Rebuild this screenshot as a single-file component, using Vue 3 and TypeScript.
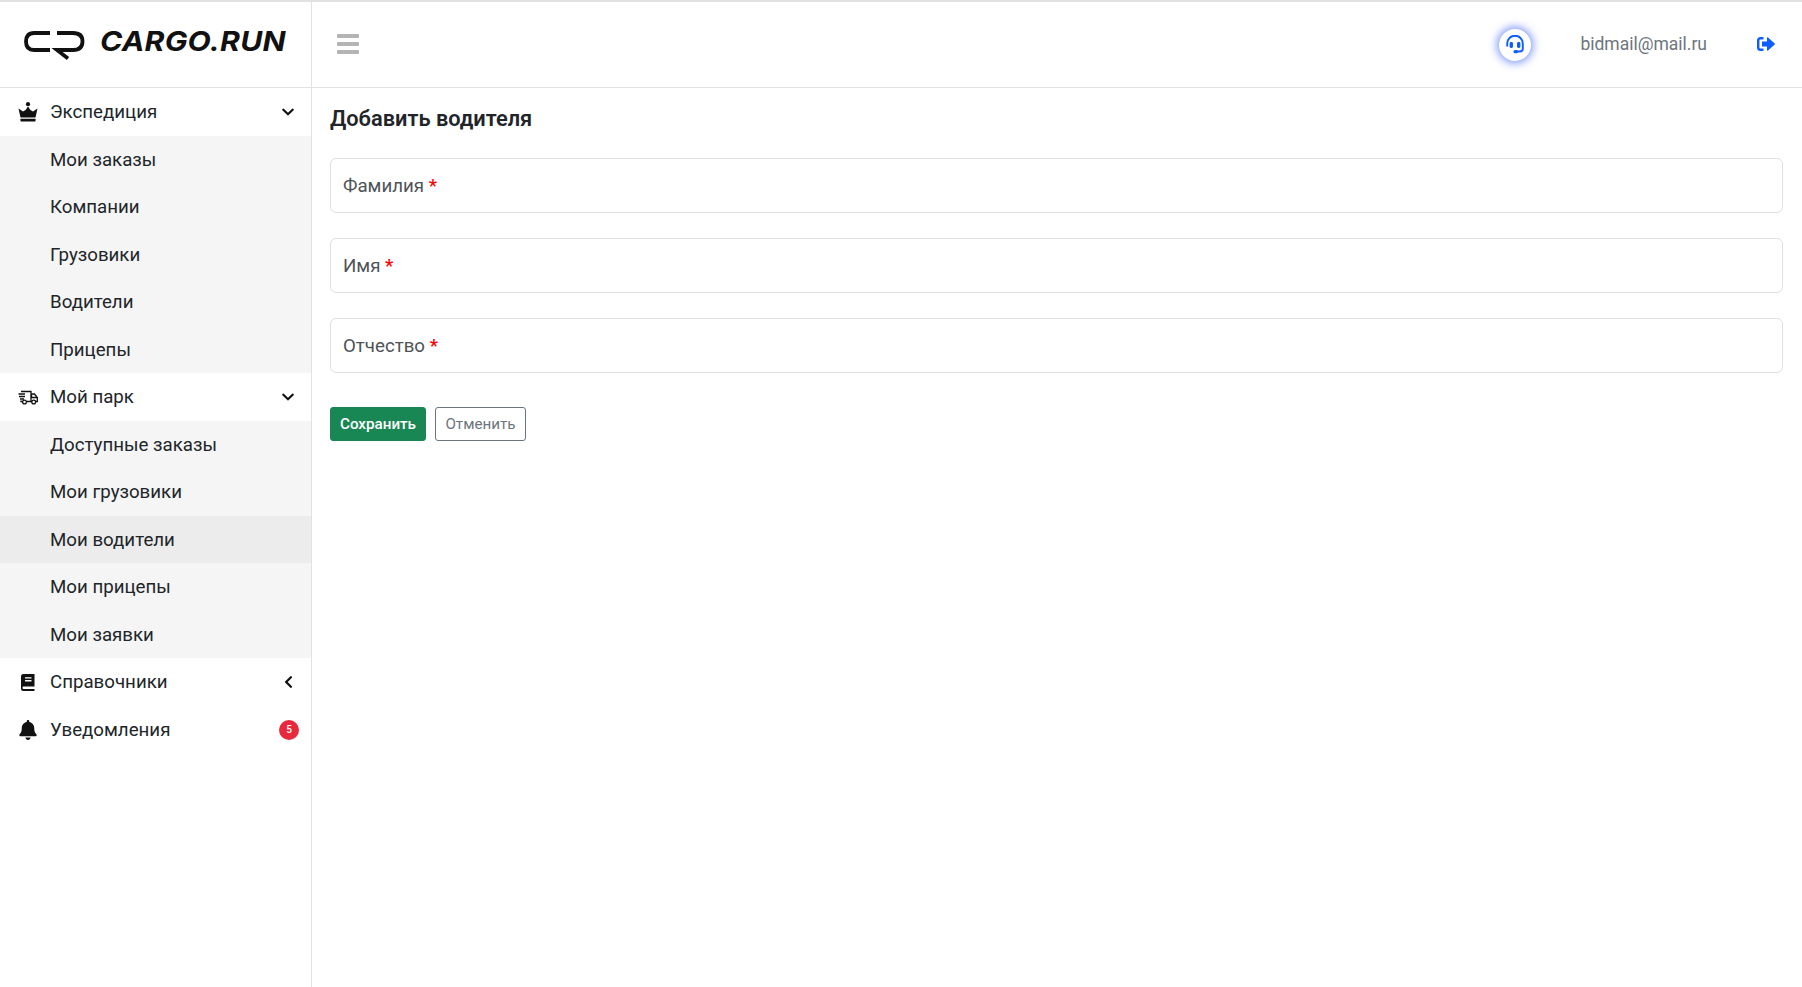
<script setup lang="ts">
interface Group {
  name: string
  icon: 'crown' | 'truck' | 'book' | 'bell'
  chevron?: 'down' | 'left'
  badge?: number
  items: { label: string; active?: boolean }[]
}

const groups: Group[] = [
  {
    name: 'Экспедиция',
    icon: 'crown',
    chevron: 'down',
    items: [
      { label: 'Мои заказы' },
      { label: 'Компании' },
      { label: 'Грузовики' },
      { label: 'Водители' },
      { label: 'Прицепы' },
    ],
  },
  {
    name: 'Мой парк',
    icon: 'truck',
    chevron: 'down',
    items: [
      { label: 'Доступные заказы' },
      { label: 'Мои грузовики' },
      { label: 'Мои водители', active: true },
      { label: 'Мои прицепы' },
      { label: 'Мои заявки' },
    ],
  },
  { name: 'Справочники', icon: 'book', chevron: 'left', items: [] },
  { name: 'Уведомления', icon: 'bell', badge: 5, items: [] },
]

const fields = ['Фамилия', 'Имя', 'Отчество']
</script>

<template>
  <div class="shell">
    <header class="brand">
      <svg class="logo-mark" viewBox="0 0 62 30" width="62" height="30" aria-hidden="true">
        <path d="M26 2H10Q2 2 2 10.500Q2 19 10 19H26" fill="none" stroke="#111" stroke-width="3.800" />
        <path d="M33 2H49Q58.500 2 58.500 10.500Q58.500 19 49 19H33L44 27.500" fill="none" stroke="#111" stroke-width="3.800" />
      </svg>
      <span class="logo-text">CARGO.RUN</span>
    </header>

    <div class="topbar">
      <svg class="burger" viewBox="0 0 22 20" width="22" height="20" aria-hidden="true">
        <rect x="0" y="0" width="22" height="4" rx="1" />
        <rect x="0" y="8" width="22" height="4" rx="1" />
        <rect x="0" y="16" width="22" height="4" rx="1" />
      </svg>
      <div class="top-right">
        <span class="support">
          <svg viewBox="0 0 18 19" width="18" height="19" aria-hidden="true">
            <path d="M1.200 11.500V8.500a7.800 7.800 0 0 1 15.600 0v5q0 3-3 3h-3" fill="none" stroke="#0d5efd" stroke-width="1.900" />
            <rect x="3.600" y="7" width="3.400" height="6" rx="1.400" fill="#0d5efd" />
            <rect x="11" y="7" width="3.400" height="6" rx="1.400" fill="#0d5efd" />
            <rect x="7.500" y="15" width="4.500" height="3.200" rx="1.500" fill="#0d5efd" />
          </svg>
        </span>
        <span class="email">bidmail@mail.ru</span>
        <svg class="logout" viewBox="0 0 18 14" width="18" height="14" aria-hidden="true">
          <path d="M6.500 1.200H3.500Q1.200 1.200 1.200 3.500V10.500Q1.200 12.800 3.500 12.800H6.500" fill="none" stroke="#0d5efd" stroke-width="2.400" />
          <path d="M5 4.600H10V0.700Q10 0 10.700 0.300L17.700 6.400Q18.200 7 17.700 7.600L10.700 13.700Q10 14 10 13.300V9.400H5Z" fill="#0d5efd" />
        </svg>
      </div>
    </div>

    <nav class="sidebar">
      <template v-for="group in groups" :key="group.name">
        <div class="nav-row">
          <span class="nav-icon">
            <svg v-if="group.icon === 'crown'" viewBox="0 0 20 20" width="20" height="20" aria-hidden="true">
              <circle cx="10" cy="2.200" r="2.100" />
              <path d="M0.500 6.500 5 9.500Q8 8.500 10 4.500Q12 8.500 15 9.500L19.500 6.500 17.500 15.500H2.500Z" />
              <rect x="2.500" y="16.800" width="15" height="2.800" rx="0.500" />
            </svg>
            <svg v-else-if="group.icon === 'truck'" viewBox="0 0 20 16" width="20" height="16" fill="none" stroke="#111" stroke-width="1.300" aria-hidden="true">
              <path d="M3 2.500H13V12.500H9M13 5H16.500L19.300 8.500V12.500H17.500M13 12.500H14M3 11.500V12.500H4" />
              <path d="M13.500 5.500V8.500H19" />
              <path d="M0.500 5H7M1 7.500H7M2 10H6" />
              <circle cx="6.500" cy="13" r="1.900" />
              <circle cx="15.700" cy="13" r="1.900" />
            </svg>
            <svg v-else-if="group.icon === 'book'" viewBox="0 0 14 17" width="14" height="17" aria-hidden="true">
              <path d="M2.500 0H13.500V12.500H2.500Q1.500 12.500 1.500 13.750T2.500 15H13.500V17H2.500Q0 17 0 14.500V2.500Q0 0 2.500 0Z" />
              <path d="M4 3.200H10.500V4.600H4ZM4 6H10.500V7.400H4Z" fill="#fff" />
            </svg>
            <svg v-else viewBox="0 0 448 512" width="18" height="20" aria-hidden="true">
              <path d="M224 512c35.320 0 63.970-28.650 63.970-64H160.030c0 35.350 28.650 64 63.970 64zm215.390-149.710c-19.320-20.760-55.470-51.990-55.470-154.290 0-77.700-54.480-139.900-127.940-155.160V32c0-17.670-14.320-32-31.980-32s-31.980 14.330-31.980 32v20.840C118.560 68.100 64.080 130.300 64.080 208c0 102.300-36.150 133.530-55.470 154.290-6 6.450-8.660 14.160-8.610 21.710.11 16.400 12.980 32 32.100 32h383.800c19.120 0 32-15.600 32.100-32 .05-7.550-2.610-15.270-8.610-21.710z" />
            </svg>
          </span>
          <span class="nav-label">{{ group.name }}</span>
          <svg v-if="group.chevron === 'down'" class="chevron" viewBox="0 0 448 512" width="12" height="14" aria-hidden="true">
            <path d="M207.029 381.476L12.686 187.132c-9.373-9.373-9.373-24.569 0-33.941l22.667-22.667c9.357-9.357 24.522-9.375 33.901-.04L224 284.505l154.745-154.021c9.379-9.335 24.544-9.317 33.901.04l22.667 22.667c9.373 9.373 9.373 24.569 0 33.941L240.971 381.476c-9.373 9.372-24.569 9.372-33.942 0z" />
          </svg>
          <svg v-else-if="group.chevron === 'left'" class="chevron chevron-left" viewBox="0 0 320 512" width="9" height="14" aria-hidden="true">
            <path d="M34.520 239.030L228.870 44.690c9.370-9.370 24.570-9.370 33.940 0l22.670 22.670c9.360 9.360 9.370 24.520.04 33.900L131.490 256l154.020 154.750c9.340 9.380 9.320 24.540-.04 33.900l-22.670 22.670c-9.370 9.370-24.570 9.370-33.940 0L34.520 272.970c-9.370-9.370-9.370-24.570 0-33.940z" />
          </svg>
          <span v-if="group.badge" class="badge">{{ group.badge }}</span>
        </div>
        <div
          v-for="item in group.items"
          :key="item.label"
          class="nav-sub"
          :class="{ active: item.active }"
        >
          {{ item.label }}
        </div>
      </template>
    </nav>

    <main class="content">
      <h1>Добавить водителя</h1>
      <form class="form" @submit.prevent>
        <label v-for="field in fields" :key="field" class="field">
          <span>{{ field }} <b>*</b></span>
          <input type="text" />
        </label>
        <div class="actions">
          <button type="submit" class="save">Сохранить</button>
          <button type="button" class="cancel">Отменить</button>
        </div>
      </form>
    </main>
  </div>
</template>

<style scoped>
.shell {
  display: grid;
  grid-template-columns: 312px 1fr;
  grid-template-rows: 86px 1fr;
  height: 985px;
  border-top: 2px solid #e2e2e2;
  font-family: Roboto, "Liberation Sans", sans-serif;
  font-size: 18.700px;
  color: #212529;
  overflow: hidden;
}
.brand {
  display: flex;
  align-items: center;
  gap: 14px;
  padding: 0 0 8px 24px;
  border-right: 1px solid #e2e2e2;
  border-bottom: 1px solid #e2e2e2;
}
.logo-mark {
  flex: none;
  margin-top: 10px;
}
.logo-text {
  display: inline-block;
  font-family: Inter, "Open Sans", sans-serif;
  font-style: italic;
  font-weight: 700;
  font-size: 27.500px;
  letter-spacing: 0.200px;
  color: #111;
  transform: scaleX(1.1);
  transform-origin: left center;
}
.topbar {
  display: flex;
  align-items: center;
  justify-content: space-between;
  padding: 0 27px 2px 25px;
  border-bottom: 1px solid #e2e2e2;
}
.burger {
  fill: #b4b4b4;
}
.top-right {
  display: flex;
  align-items: center;
}
.support {
  display: flex;
  align-items: center;
  justify-content: center;
  width: 32px;
  height: 32px;
  margin-top: 2px;
  border-radius: 50%;
  background: #fff;
  box-shadow: 0 0 8px 2px rgba(40, 80, 250, 0.6);
}
.email {
  margin-left: 49px;
  font-size: 17.500px;
  color: #6c757d;
}
.logout {
  margin-left: 50px;
}
.sidebar {
  border-right: 1px solid #e2e2e2;
  display: flex;
  flex-direction: column;
  padding-top: 0.400px;
}
.nav-row,
.nav-sub {
  display: flex;
  align-items: center;
  height: 47.500px;
  flex: none;
}
.nav-row {
  background: #fff;
}
.nav-sub {
  padding-left: 50px;
  background: #f5f5f5;
}
.nav-sub.active {
  background: #ececec;
}
.nav-icon {
  display: flex;
  justify-content: center;
  width: 20px;
  margin: 0 12px 0 18px;
  fill: #111;
}
.nav-label {
  flex: 1;
}
.chevron {
  margin-right: 17px;
  fill: #111;
}
.chevron-left {
  margin-right: 18px;
}
.badge {
  display: flex;
  align-items: center;
  justify-content: center;
  width: 20px;
  height: 20px;
  margin-right: 12px;
  border-radius: 50%;
  background: #e8293b;
  color: #fff;
  font-size: 10px;
  font-weight: 500;
}
.content {
  padding: 15px 19px 0 18px;
}
h1 {
  margin: 0 0 24px;
  font-size: 21.800px;
  line-height: 31px;
  font-weight: 600;
  color: #212529;
}
.form {
  display: flex;
  flex-direction: column;
  gap: 25px;
}
.field {
  display: flex;
  align-items: center;
  height: 55px;
  box-sizing: border-box;
  padding: 0 12px;
  border: 1px solid #e0e0e0;
  border-radius: 6px;
  color: #4f5357;
}
.field span {
  flex: none;
  white-space: pre;
}
.field b {
  color: #f00;
  font-weight: 500;
}
.field input {
  flex: 1;
  min-width: 0;
  border: 0;
  outline: 0;
  background: transparent;
}
.actions {
  display: flex;
  gap: 9px;
  margin-top: 9px;
}
.actions button {
  height: 34px;
  box-sizing: border-box;
  border-radius: 3px;
  font-family: inherit;
  font-size: 15.200px;
  padding: 0;
}
.save {
  width: 96px;
  background: #198754;
  border: 1px solid #198754;
  color: #fff;
  font-weight: 500;
}
.cancel {
  width: 91px;
  background: #fff;
  border: 1px solid #6c757d;
  color: #6c757d;
}
</style>
